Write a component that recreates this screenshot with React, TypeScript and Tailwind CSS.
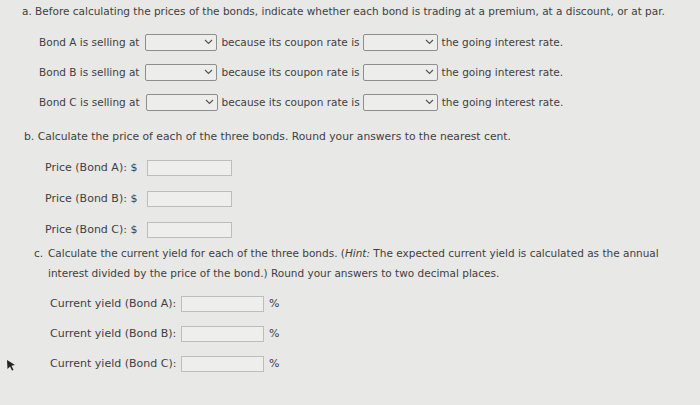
import React from "react"

const font = { fontFamily: '"DejaVu Sans", Verdana, sans-serif' }

function Select({ w }: { w: string }) {
  return (
    <span
      className={`${w} h-[17px] inline-flex items-center justify-end pr-[3px] border border-[#8e8e8e] rounded-[2px] bg-[#ededeb]`}
    >
      <svg width="9" height="6" viewBox="0 0 9 6" fill="none">
        <path d="M1 1 L4.5 4.5 L8 1" stroke="#555" strokeWidth="1.2" />
      </svg>
    </span>
  )
}

function Box({ w }: { w: string }) {
  return <span className={`${w} h-[16px] inline-block border border-[#bdbdbb] bg-[#eeeeec]`} />
}

function BondRow({ bond }: { bond: string }) {
  return (
    <div className="flex items-center h-[18px] pl-[39px]">
      <span>Bond {bond} is selling at</span>
      <span className="ml-[6px]">
        <Select w="w-[72px]" />
      </span>
      <span className="ml-[4px]">because its coupon rate is</span>
      <span className="ml-[3px]">
        <Select w="w-[75px]" />
      </span>
      <span className="ml-[4px]">the going interest rate.</span>
    </div>
  )
}

export default function App() {
  return (
    <div
      className="relative w-[700px] h-[405px] overflow-hidden bg-[#e8e8e6] text-[#3f3f3f] text-[10.5px] leading-[14px]"
      style={font}
    >
      {/* Part a */}
      <div className="pl-[22px] pt-[4px]">
        a. Before calculating the prices of the bonds, indicate whether each bond is trading at a premium, at a discount, or at par.
      </div>
      <div className="mt-[15px] flex flex-col gap-[12px]">
        <BondRow bond="A" />
        <BondRow bond="B" />
        <BondRow bond="C" />
      </div>

      {/* Part b */}
      <div className="pl-[24px] mt-[19px] text-[10.75px]">
        b. Calculate the price of each of the three bonds. Round your answers to the nearest cent.
      </div>
      <div className="mt-[16px] flex flex-col gap-[15px] pl-[45px] text-[11px]">
        {["A", "B", "C"].map((b) => (
          <div key={b} className="flex items-center h-[16px]">
            <span className="w-[102px]">Price (Bond {b}): $</span>
            <Box w="w-[85px]" />
          </div>
        ))}
      </div>

      {/* Part c */}
      <div className="flex pl-[34px] mt-[5px] leading-[20px]">
        <span className="w-[14px] shrink-0">c.</span>
        <div>
          Calculate the current yield for each of the three bonds. (<i>Hint:</i> The expected current yield is calculated as the annual
          <br />
          interest divided by the price of the bond.) Round your answers to two decimal places.
        </div>
      </div>
      <div className="mt-[13px] flex flex-col gap-[14px] pl-[50px] text-[11px]">
        {["A", "B", "C"].map((b) => (
          <div key={b} className="flex items-center h-[16px]">
            <span className="w-[131px]">Current yield (Bond {b}):</span>
            <Box w="w-[83px]" />
            <span className="ml-[5px]">%</span>
          </div>
        ))}
      </div>

      {/* mouse pointer */}
      <svg className="absolute left-[5px] top-[359px]" width="12" height="13" viewBox="0 0 12 13">
        <path d="M2 1 L10 6 L6.5 6.8 L8.5 11 L7 11.6 L5 7.5 L2.5 10 Z" fill="#222" />
      </svg>
    </div>
  )
}
